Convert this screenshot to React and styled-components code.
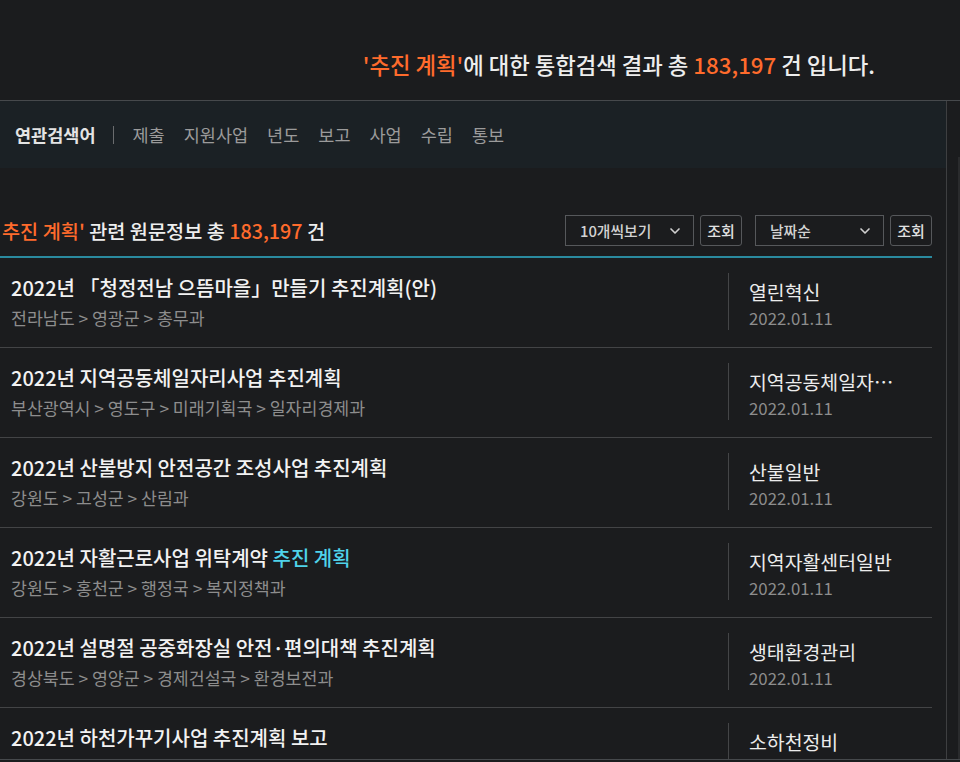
import React from "react";
import styled, { createGlobalStyle } from "styled-components";
import { ChevronDown } from "lucide-react";

const GlobalStyle = createGlobalStyle`
  html, body { margin: 0; padding: 0; background: #1b1c1e; }
  body { font-family: "Noto Sans CJK KR", "Noto Sans", sans-serif; color: #eaeaea; }
  * { box-sizing: border-box; }
`;

const Page = styled.div`
  width: 960px;
  height: 762px;
  overflow: hidden;
  display: flex;
  flex-direction: column;
  background: #1b1c1e;
`;

const Header = styled.header`
  height: 100px;
  flex: none;
  display: flex;
  align-items: center;
  justify-content: flex-end;
  padding: 27px 85px 0 0;
  font-size: 22.3px;
  font-weight: 500;
  color: #ededed;
  white-space: pre;
`;

const Accent = styled.span`
  color: #ff6b2c;
`;

const Main = styled.div`
  height: 660px;
  flex: none;
  display: flex;
  border-top: 1px solid #46494c;
  border-bottom: 1px solid #46494c;
  overflow: hidden;
`;

const Content = styled.div`
  width: 947px;
  flex: none;
  border-right: 1px solid #3e3f41;
  display: flex;
  flex-direction: column;
`;

const Gutter = styled.div`
  flex: 1;
  display: flex;
  justify-content: flex-end;
  padding-top: 56px;
`;

const ScrollTrack = styled.div`
  width: 2px;
  background: #2a2b2d;
`;

const RelatedBar = styled.nav`
  height: 67px;
  flex: none;
  background: #1b2125;
  display: flex;
  align-items: center;
  padding-left: 15px;
  font-size: 17.5px;
`;

const RelatedLabel = styled.strong`
  font-weight: 700;
  color: #e4e4e4;
`;

const Divider = styled.span`
  width: 1px;
  height: 18px;
  background: #6a6c6e;
  margin: 0 19px 0 17px;
`;

const RelatedList = styled.div`
  display: flex;
  gap: 19px;
  color: #9b9b9b;
`;

const Results = styled.section`
  width: 932px;
  display: flex;
  flex-direction: column;
`;

const ResultHead = styled.div`
  display: flex;
  align-items: center;
  justify-content: space-between;
  padding: 47px 0 10px;
  border-bottom: 2px solid #2a8a9f;
`;

const ResultTitle = styled.h2`
  margin: 0 0 0 2px;
  font-size: 19.7px;
  font-weight: 500;
  color: #eeeeee;
  white-space: pre;
`;

const Controls = styled.div`
  display: flex;
  gap: 6px;
`;

const ControlGroup = styled.div`
  display: flex;
  gap: 6px;
  margin-left: ${(p) => (p.$spaced ? "7px" : "0")};
`;

const SelectBox = styled.div`
  width: 129px;
  height: 31px;
  border: 1px solid #56585b;
  display: flex;
  align-items: center;
  justify-content: space-between;
  padding: 0 10px 0 14px;
  font-size: 14.8px;
  font-weight: 500;
  color: #d2d2d2;
`;

const Button = styled.button`
  width: 42px;
  height: 31px;
  border: 1px solid #56585b;
  border-radius: 3px;
  background: transparent;
  color: #e0e0e0;
  font-family: inherit;
  font-size: 15px;
  font-weight: 500;
  padding: 0;
`;

const Row = styled.article`
  display: flex;
  height: 90px;
  border-bottom: 1px solid #434446;
`;

const RowMain = styled.div`
  flex: 1;
  min-width: 0;
  padding: 16px 0 0 11px;
  display: flex;
  flex-direction: column;
  gap: 4px;
`;

const RowTitle = styled.h3`
  margin: 0;
  font-size: 20px;
  line-height: 28px;
  font-weight: 500;
  color: #f2f2f2;
  white-space: nowrap;
`;

const Highlight = styled.span`
  color: #4fd3ea;
`;

const Path = styled.div`
  font-size: 17.3px;
  line-height: 24px;
  color: #8d8d8d;
  white-space: nowrap;
`;

const RowSide = styled.div`
  width: 204px;
  flex: none;
  align-self: flex-start;
  margin-top: 15px;
  height: 57px;
  border-left: 1px solid #444547;
  padding: 5px 0 0 20px;
  display: flex;
  flex-direction: column;
  gap: 2px;
`;

const Category = styled.div`
  width: 160px;
  font-size: 19.4px;
  line-height: 27px;
  color: #ececec;
  white-space: nowrap;
  overflow: hidden;
  text-overflow: ellipsis;
`;

const DateText = styled.div`
  font-size: 16.8px;
  line-height: 23px;
  color: #8d8d8d;
`;

const related = ["제출", "지원사업", "년도", "보고", "사업", "수립", "통보"];

const rows = [
  {
    title: ["2022년 「청정전남 으뜸마을」만들기 추진계획(안)"],
    path: "전라남도 > 영광군 > 총무과",
    cat: "열린혁신",
  },
  {
    title: ["2022년 지역공동체일자리사업 추진계획"],
    path: "부산광역시 > 영도구 > 미래기획국 > 일자리경제과",
    cat: "지역공동체일자리사업",
  },
  {
    title: ["2022년 산불방지 안전공간 조성사업 추진계획"],
    path: "강원도 > 고성군 > 산림과",
    cat: "산불일반",
  },
  {
    title: ["2022년 자활근로사업 위탁계약 ", "추진 계획"],
    path: "강원도 > 홍천군 > 행정국 > 복지정책과",
    cat: "지역자활센터일반",
  },
  {
    title: ["2022년 설명절 공중화장실 안전·편의대책 추진계획"],
    path: "경상북도 > 영양군 > 경제건설국 > 환경보전과",
    cat: "생태환경관리",
  },
  {
    title: ["2022년 하천가꾸기사업 추진계획 보고"],
    path: "경상남도 > 하동군 > 건설과",
    cat: "소하천정비",
  },
];

export default function App() {
  return (
    <>
      <GlobalStyle />
      <Page>
        <Header>
          <Accent>'추진 계획'</Accent>에 대한 통합검색 결과 총 <Accent>183,197</Accent> 건 입니다.
        </Header>
        <Main>
          <Content>
            <RelatedBar>
              <RelatedLabel>연관검색어</RelatedLabel>
              <Divider />
              <RelatedList>
                {related.map((r) => (
                  <span key={r}>{r}</span>
                ))}
              </RelatedList>
            </RelatedBar>
            <Results>
              <ResultHead>
                <ResultTitle>
                  <Accent>추진 계획'</Accent> 관련 원문정보 총 <Accent>183,197</Accent> 건
                </ResultTitle>
                <Controls>
                  <ControlGroup>
                    <SelectBox>
                      <span>10개씩보기</span>
                      <ChevronDown size={16} strokeWidth={2.5} color="#cfcfcf" />
                    </SelectBox>
                    <Button>조회</Button>
                  </ControlGroup>
                  <ControlGroup $spaced>
                    <SelectBox>
                      <span>날짜순</span>
                      <ChevronDown size={16} strokeWidth={2.5} color="#cfcfcf" />
                    </SelectBox>
                    <Button>조회</Button>
                  </ControlGroup>
                </Controls>
              </ResultHead>
              {rows.map((r, i) => (
                <Row key={i}>
                  <RowMain>
                    <RowTitle>
                      {r.title[0]}
                      {r.title[1] && <Highlight>{r.title[1]}</Highlight>}
                    </RowTitle>
                    <Path>{r.path}</Path>
                  </RowMain>
                  <RowSide>
                    <Category>{r.cat}</Category>
                    <DateText>2022.01.11</DateText>
                  </RowSide>
                </Row>
              ))}
            </Results>
          </Content>
          <Gutter>
            <ScrollTrack />
          </Gutter>
        </Main>
      </Page>
    </>
  );
}
